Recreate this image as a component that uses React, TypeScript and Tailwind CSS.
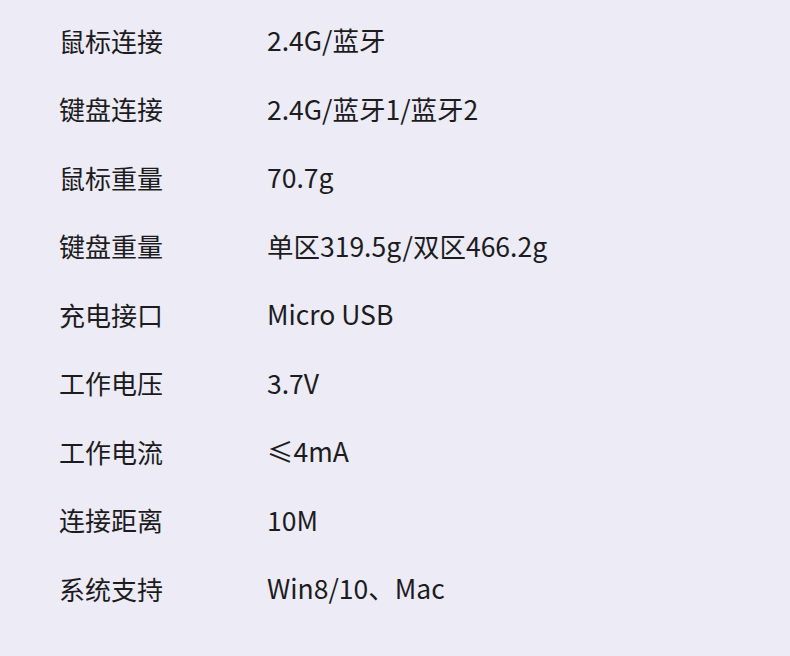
const specs: [string, string][] = [
  ['鼠标连接', '2.4G/蓝牙'],
  ['键盘连接', '2.4G/蓝牙1/蓝牙2'],
  ['鼠标重量', '70.7g'],
  ['键盘重量', '单区319.5g/双区466.2g'],
  ['充电接口', 'Micro USB'],
  ['工作电压', '3.7V'],
  ['工作电流', '≤4mA'],
  ['连接距离', '10M'],
  ['系统支持', 'Win8/10、Mac'],
];

export default function App() {
  return (
    <div
      className="w-[790px] h-[656px] bg-[#ecebf6] text-[#1c1c1f] pl-[59px] pt-[6px]"
      style={{ fontFamily: '"Noto Sans CJK SC", "Noto Sans", sans-serif' }}
    >
      {specs.map(([label, value]) => (
        <div key={label} className="flex items-center h-[68.5px]">
          <span className="w-[208px] text-[26px]">{label}</span>
          <span className="text-[26.5px]">{value}</span>
        </div>
      ))}
    </div>
  );
}
